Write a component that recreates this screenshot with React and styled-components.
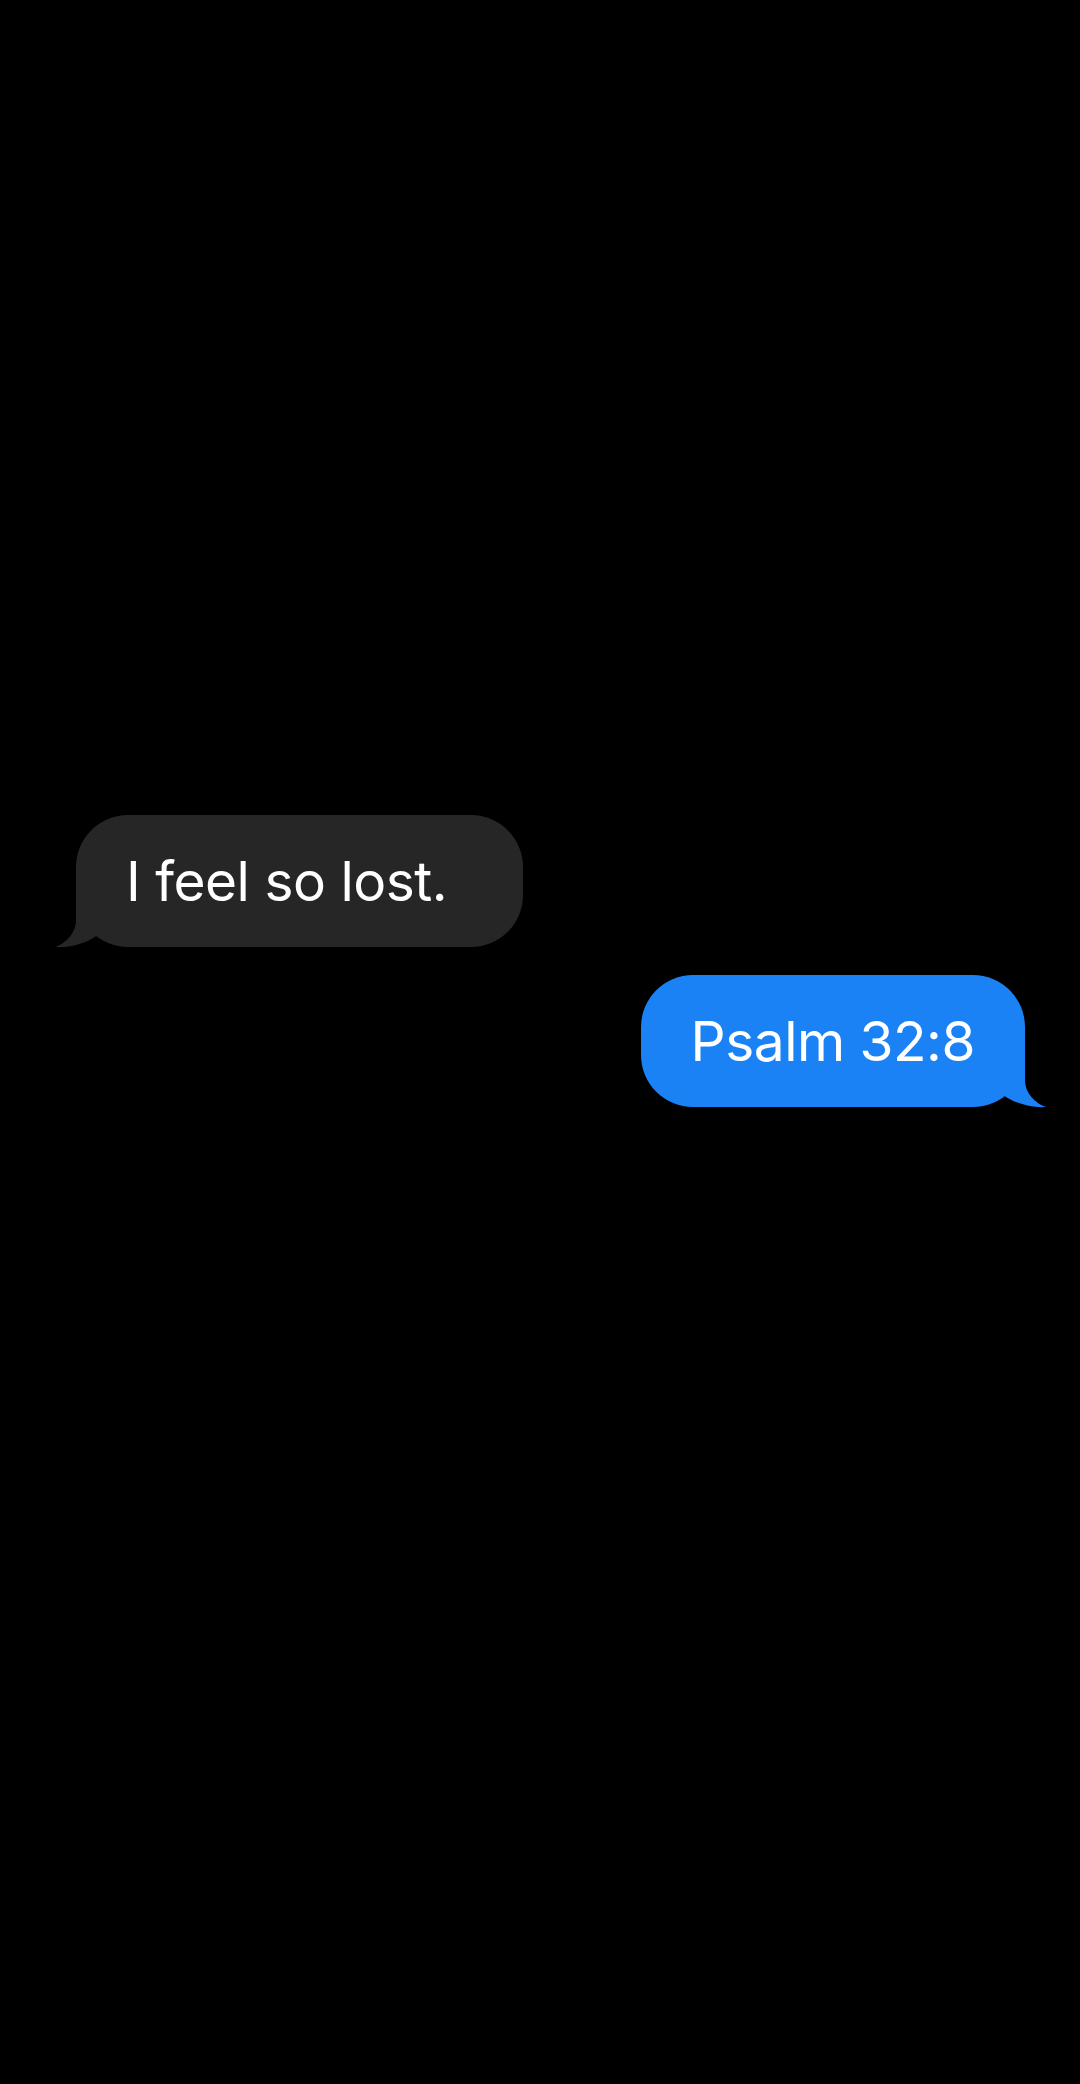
import React from 'react'
import styled, { createGlobalStyle } from 'styled-components'

const Global = createGlobalStyle`
  html, body {
    margin: 0;
    padding: 0;
    background: #000;
  }
`;

const tailPath = 'M22 0 L22 33 C22 46 12 56 1 60 C17 61 33 56 44 48 L44 0 Z';

export default function App() {
  return (
    <Screen>
      <Global />
      <Thread>
        <Bubble $from="them" $padRight={76}>
          I feel so lost.
          <Tail $from="them" viewBox="0 0 62 62" width="62" height="62">
            <path d={tailPath} />
          </Tail>
        </Bubble>
        <Bubble $from="me">
          Psalm 32:8
          <Tail $from="me" viewBox="0 0 62 62" width="62" height="62">
            <path d={tailPath} />
          </Tail>
        </Bubble>
      </Thread>
    </Screen>
  )
}

const Screen = styled.div`
  min-height: 2084px;
  background: #000;
  font-family: Inter, "Noto Sans", "Liberation Sans", sans-serif;
`;

const Thread = styled.div`
  display: flex;
  flex-direction: column;
  gap: 28px;
  padding: 815px 55px 0 76px;
`;

const Bubble = styled.div`
  position: relative;
  align-self: ${p => (p.$from === 'me' ? 'flex-end' : 'flex-start')};
  height: 132px;
  display: flex;
  align-items: center;
  padding: 0 ${p => p.$padRight || 50}px 0 50px;
  border-radius: 52px;
  background: ${p => (p.$from === 'me' ? '#1b82f6' : '#262627')};
  color: #fff;
  font-size: 55px;
  font-weight: 400;
  letter-spacing: -0.5px;
  white-space: nowrap;

  svg {
    fill: ${p => (p.$from === 'me' ? '#1b82f6' : '#262627')};
  }
`;

const Tail = styled.svg`
  position: absolute;
  bottom: -2px;
  ${p => (p.$from === 'me' ? 'right: -22px; transform: scaleX(-1);' : 'left: -22px;')}
`;
